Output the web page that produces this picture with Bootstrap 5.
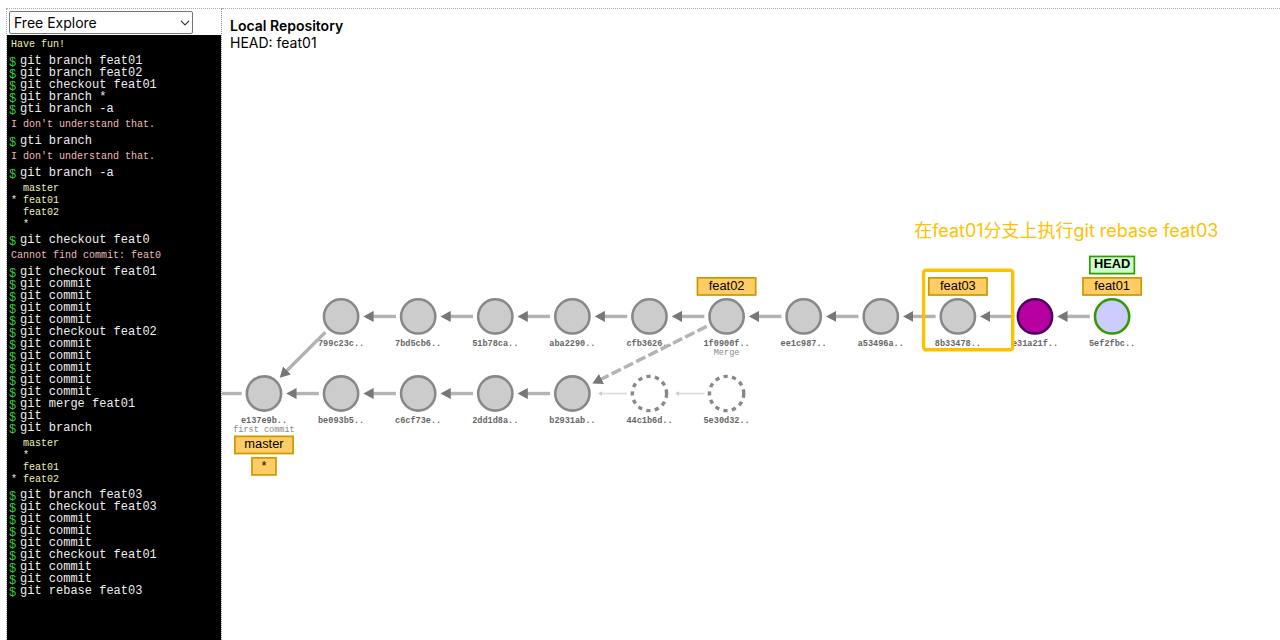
<!DOCTYPE html>
<html lang="en">
<head>
<meta charset="utf-8">
<meta name="viewport" content="width=device-width, initial-scale=1">
<title>Explain Git</title>
<link rel="stylesheet" href="https://cdn.jsdelivr.net/npm/bootstrap@5.3.0/dist/css/bootstrap.min.css">
<style>
  body { font-family: Inter, "Noto Sans CJK SC", sans-serif; font-size: 14px; color: #000; background: #fff; }
  .playground { padding: 8px 0 0 6px; }
  .frame-box { border-top: 1px dotted #aaa; border-left: 1px dotted #aaa; min-width: 0; }
  .side { width: 216px; border-right: 1px dotted #888; }
  .level-bar { padding: 2px 2px 1px; }
  .level-pick { width: 184px; height: 23px; padding: 0 20px 0 4px; font-size: 14px; line-height: 21px; color: #000;
    border: 1px solid #767676; border-radius: 2px; background-size: 10px 10px; background-position: right 2px center; }
  .terminal { background: #000; color: #eee; font-family: "Liberation Mono", monospace; font-size: 12px; line-height: 12px; }
  .entry { height: 12px; padding-left: 2px; }
  .prompt { width: 11px; color: #3c3; line-height: 16px; }
  .reply { margin: 0; padding: 4px; font-family: inherit; font-size: 10px; line-height: 12px; color: #eeb; overflow: hidden; }
  .listing { padding-bottom: 3px; }
  .fault { color: #ebb; }
  .repo-head { height: 41px; padding: 8px 8px 0; line-height: 17px; }
  .repo-name { font-size: 14px; line-height: 17px; font-weight: 600; margin: 0; }
  .graph { width: 100%; }
  .dot { fill: #ccc; stroke: #888; stroke-width: 3; }
  .dot.ghost { fill: #fff; stroke: #888; stroke-width: 4; stroke-dasharray: 5 5; }
  .dot.rebased { fill: #b800a0; stroke: #4b0066; }
  .dot.current { fill: #ccf; stroke: #390; }
  .link { stroke: #b3b3b3; stroke-width: 4; fill: none; }
  .link.merge { stroke-dasharray: 12 4; }
  .link.ghost { stroke: #ddd; stroke-width: 2; }
  .sha, .note { font-family: "Liberation Mono", monospace; font-size: 10px; text-anchor: middle; }
  .sha { font-weight: 700; fill: #666; }
  .note { fill: #888; }
  .tag rect { fill: #fc6; stroke: #c90; stroke-width: 2; }
  .tag text { font-family: "Liberation Sans", sans-serif; font-size: 15px; text-anchor: middle; }
  .tag.head rect { fill: #cfc; stroke: #390; }
  .tag.head text { font-weight: 700; }
  .marker-box { fill: none; stroke: #fdc100; stroke-width: 4; }
  .marker-text { fill: #fdc100; font-size: 21px; }
</style>
</head>
<body>
<div class="playground d-flex vh-100 overflow-hidden">
  <aside class="side frame-box d-flex flex-column flex-shrink-0">
    <div class="level-bar">
      <select class="form-select level-pick" aria-label="Level"><option>Free Explore</option></select>
    </div>
    <div class="terminal flex-grow-1 overflow-hidden" id="terminal"></div>
  </aside>
  <main class="frame-box border-start-0 flex-grow-1 d-flex flex-column">
    <header class="repo-head">
      <h1 class="repo-name">Local Repository</h1>
      <div>HEAD: feat01</div>
    </header>
    <svg class="graph d-block" viewBox="1 0 1235 688" role="img" aria-label="Commit graph">
      <defs>
        <marker id="tip" markerUnits="userSpaceOnUse" markerWidth="12" markerHeight="13" refX="12" refY="6.5" orient="auto"><path d="M0 0L12 6.5L0 13z" fill="#777"/></marker>
        <marker id="tipGhost" markerUnits="userSpaceOnUse" markerWidth="6" markerHeight="6" refX="5" refY="3" orient="auto"><path d="M0 0L5 3L0 6z" fill="#ccc"/></marker>
      </defs>
      <g id="graph"></g>
      <rect class="marker-box" x="820" y="257" width="104" height="93" rx="3"/>
      <text class="marker-text" x="809" y="218">在feat01分支上执行git rebase feat03</text>
    </svg>
  </main>
</div>
<script>
  // Terminal log: "$" typed command, "i" reply, "l" listing, "e" error
  const log = [
    ['i', 'Have fun!'],
    ['$', 'git branch feat01'], ['$', 'git branch feat02'], ['$', 'git checkout feat01'], ['$', 'git branch *'], ['$', 'gti branch -a'],
    ['e', "I don't understand that."], ['$', 'gti branch'], ['e', "I don't understand that."], ['$', 'git branch -a'],
    ['l', '  master\n* feat01\n  feat02\n  *'],
    ['$', 'git checkout feat0'], ['e', 'Cannot find commit: feat0'],
    ['$', 'git checkout feat01'], ['$', 'git commit'], ['$', 'git commit'], ['$', 'git commit'], ['$', 'git commit'],
    ['$', 'git checkout feat02'], ['$', 'git commit'], ['$', 'git commit'], ['$', 'git commit'], ['$', 'git commit'], ['$', 'git commit'],
    ['$', 'git merge feat01'], ['$', 'git'], ['$', 'git branch'],
    ['l', '  master\n  *\n  feat01\n* feat02'],
    ['$', 'git branch feat03'], ['$', 'git checkout feat03'], ['$', 'git commit'], ['$', 'git commit'], ['$', 'git commit'],
    ['$', 'git checkout feat01'], ['$', 'git commit'], ['$', 'git commit'], ['$', 'git rebase feat03']
  ];
  const kinds = { i: 'reply', l: 'reply listing', e: 'reply fault' };
  document.getElementById('terminal').innerHTML = log.map(([k, t]) => k === '$'
    ? `<div class="entry d-flex"><span class="prompt">$</span><span>${t}</span></div>`
    : `<pre class="${kinds[k]}">${t}</pre>`).join('');

  // Commits: id, column, row, parents, style, note
  const commits = [
    ['e137e9b', 0, 1, [], '', 'first commit'], ['be093b5', 1, 1, ['e137e9b']], ['c6cf73e', 2, 1, ['be093b5']],
    ['2dd1d8a', 3, 1, ['c6cf73e']], ['b2931ab', 4, 1, ['2dd1d8a']],
    ['44c1b6d', 5, 1, ['b2931ab'], 'ghost'], ['5e30d32', 6, 1, ['44c1b6d'], 'ghost'],
    ['799c23c', 1, 0, ['e137e9b']], ['7bd5cb6', 2, 0, ['799c23c']], ['51b78ca', 3, 0, ['7bd5cb6']],
    ['aba2290', 4, 0, ['51b78ca']], ['cfb3626', 5, 0, ['aba2290']],
    ['1f0900f', 6, 0, ['cfb3626', 'b2931ab'], '', 'Merge'], ['ee1c987', 7, 0, ['1f0900f']], ['a53496a', 8, 0, ['ee1c987']],
    ['8b33478', 9, 0, ['a53496a']], ['e31a21f', 10, 0, ['8b33478'], 'rebased'], ['5ef2fbc', 11, 0, ['e31a21f'], 'current']
  ];
  // Tags: name, style, column, centre y, width
  const tags = [
    ['master', '', 0, 461, 68], ['*', '', 0, 486, 28], ['feat02', '', 6, 276, 68],
    ['feat03', '', 9, 276, 68], ['feat01', '', 11, 276, 68], ['HEAD', 'head', 11, 251, 52]
  ];
  const px = c => 50 + 90 * c, py = r => 311 + 90 * r;
  const at = Object.fromEntries(commits.map(([id, c, r]) => [id, [px(c), py(r)]]));
  let links = '<path class="link" d="M0 401H24"/>', dots = '', labels = '';
  for (const [id, c, r, parents, style = '', note = ''] of commits) {
    const x = px(c), y = py(r);
    parents.forEach((p, i) => {
      const [tx, ty] = at[p], d = Math.hypot(tx - x, ty - y), ux = (tx - x) / d, uy = (ty - y) / d;
      const ghost = style === 'ghost', tip = ghost ? 30 : 26, back = ghost ? tip + 4 : tip + 9;
      const p1 = [x + ux * 26, y + uy * 26], p2 = [tx - ux * back, ty - uy * back], p3 = [tx - ux * tip, ty - uy * tip];
      links += `<path class="link ${ghost ? 'ghost' : ''} ${i ? 'merge' : ''}" d="M${p1}L${p2}"/>`
        + `<path fill="none" d="M${p2}L${p3}" marker-end="url(#${ghost ? 'tipGhost' : 'tip'})"/>`;
    });
    dots += `<circle class="dot ${style}" cx="${x}" cy="${y}" r="20"/>`;
    labels += `<text class="sha" x="${x}" y="${y + 34}">${id}..</text>`;
    if (note) labels += `<text class="note" x="${x}" y="${y + 45}">${note}</text>`;
  }
  for (const [name, style, c, y, w] of tags)
    labels += `<g class="tag ${style}"><rect x="${px(c) - w / 2}" y="${y - 10}" width="${w}" height="20"/><text x="${px(c)}" y="${y + 4}">${name}</text></g>`;
  document.getElementById('graph').innerHTML = labels + links + dots;
</script>
<script src="https://cdn.jsdelivr.net/npm/bootstrap@5.3.0/dist/js/bootstrap.bundle.min.js"></script>
</body>
</html>
